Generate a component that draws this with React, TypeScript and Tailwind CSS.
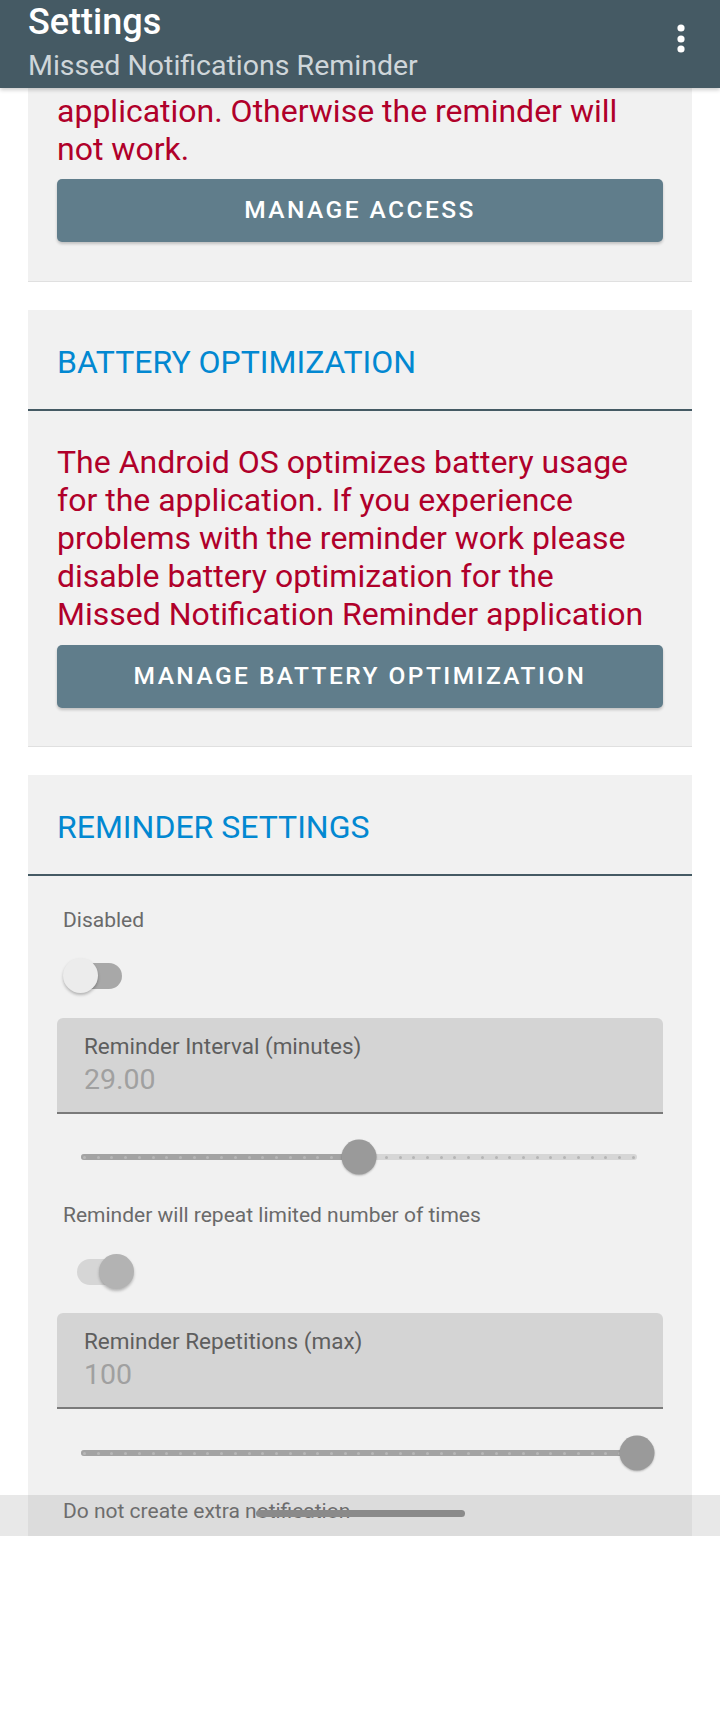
import React from "react";

const ROBOTO = { fontFamily: "Roboto, 'Noto Sans', sans-serif" };

function Ticks({ split }: { split: number }) {
  const n = 40;
  const items = [];
  for (let i = 0; i <= n; i++) {
    const active = i / n <= split;
    items.push(
      <span
        key={i}
        className={
          "block w-[3px] h-[3px] rounded-full " +
          (active ? "bg-[#b8b8b8]" : "bg-[#b4b4b4]")
        }
      />
    );
  }
  return (
    <div className="absolute inset-0 flex items-center justify-between px-[2px]">
      {items}
    </div>
  );
}

function Slider({ value }: { value: number }) {
  return (
    <div className="h-[40px] flex items-center pl-[24px] pr-[26px]">
      <div className="relative w-full h-[6px] rounded-full bg-[#d6d6d6]">
        <div
          className="absolute left-0 top-0 h-full rounded-full bg-[#a3a3a3]"
          style={{ width: `${value * 100}%` }}
        />
        <Ticks split={value} />
        <div
          className="absolute top-1/2 w-[35px] h-[35px] -translate-x-1/2 -translate-y-1/2 rounded-full bg-[#9a9a9a] shadow-[0_1px_2px_rgba(0,0,0,0.25)]"
          style={{ left: `${value * 100}%` }}
        />
      </div>
    </div>
  );
}

function Switch({ on }: { on: boolean }) {
  return (
    <div className="h-[36px] pl-[6px] flex items-center">
      <div className="relative w-[72px] h-[36px]">
        <div
          className={
            "absolute left-[14px] top-[5px] w-[45px] h-[26px] rounded-full " +
            (on ? "bg-[#d6d6d6]" : "bg-[#a8a8a8]")
          }
        />
        <div
          className={
            "absolute top-0 w-[35px] h-[35px] rounded-full shadow-[0_2px_3px_rgba(0,0,0,0.25)] " +
            (on ? "left-[36px] bg-[#b3b3b3]" : "left-0 bg-[#ececec]")
          }
        />
      </div>
    </div>
  );
}

function Field({ label, value }: { label: string; value: string }) {
  return (
    <div className="h-[96px] bg-[#d4d4d4] rounded-t-[6px] border-b-2 border-[#7a7a7a] pl-[27px] pt-[14px]">
      <div className="h-[28px] leading-[28px] text-[22.5px] text-[#5e5e5e]">{label}</div>
      <div className="h-[38px] leading-[38px] text-[28.5px] text-[#a0a0a0] mt-[1px]">{value}</div>
    </div>
  );
}

function Hint({ children }: { children: React.ReactNode }) {
  return (
    <div className="h-[28px] leading-[28px] pl-[6px] text-[21px] text-[#6a6a6a]">
      {children}
    </div>
  );
}

function Red({ lines }: { lines: string[] }) {
  return (
    <div className="text-[#b0002a] text-[32px] leading-[38px]">
      {lines.map((l, i) => (
        <div key={i} className="whitespace-nowrap">
          {l}
        </div>
      ))}
    </div>
  );
}

function Button({ children }: { children: React.ReactNode }) {
  return (
    <div className="h-[63px] rounded-[5px] bg-[#607d8b] shadow-[0_2px_3px_rgba(0,0,0,0.2)] flex items-center justify-center text-white text-[24.5px] font-medium tracking-[0.1em]">
      {children}
    </div>
  );
}

function SectionTitle({ children }: { children: React.ReactNode }) {
  return (
    <div className="h-[101px] flex items-center pl-[29px] border-b-2 border-[#455a64]">
      <span className="text-[32px] text-[#0288d1] pt-[4px]">{children}</span>
    </div>
  );
}

export default function App() {
  return (
    <div className="w-[720px] h-[1712px] bg-white relative overflow-hidden" style={ROBOTO}>
      <div className="h-[1536px] relative overflow-hidden bg-white">
        {/* header */}
        <div className="absolute top-0 left-0 right-0 h-[88px] bg-[#455a64] z-10 shadow-[0_2px_4px_rgba(0,0,0,0.2)] pl-[28px] pt-[2px] flex flex-col">
          <div className="h-[40px] leading-[40px] text-[36px] font-medium text-white">Settings</div>
          <div className="h-[32px] leading-[32px] mt-[8px] text-[28.5px] text-[#cfd6da]">
            Missed Notifications Reminder
          </div>
          <svg className="absolute left-[675px] top-[22px]" width="12" height="34" viewBox="0 0 12 34">
            <circle cx="6" cy="6" r="3.6" fill="#fff" />
            <circle cx="6" cy="17" r="3.6" fill="#fff" />
            <circle cx="6" cy="27" r="3.6" fill="#fff" />
          </svg>
        </div>

        <div className="pt-[88px] px-[28px] flex flex-col">
          {/* card 1 (scrolled) */}
          <div className="bg-[#f1f1f1] border-b border-[#e0e0e0] px-[29px] pt-[4px] pb-[39px]">
            <Red lines={["application. Otherwise the reminder will", "not work."]} />
            <div className="mt-[11px]">
              <Button>MANAGE ACCESS</Button>
            </div>
          </div>

          {/* card 2 */}
          <div className="mt-[28px] bg-[#f1f1f1] border-b border-[#e0e0e0]">
            <SectionTitle>BATTERY OPTIMIZATION</SectionTitle>
            <div className="px-[29px] pt-[32px] pb-[38px]">
              <Red
                lines={[
                  "The Android OS optimizes battery usage",
                  "for the application. If you experience",
                  "problems with the reminder work please",
                  "disable battery optimization for the",
                  "Missed Notification Reminder application",
                ]}
              />
              <div className="mt-[12px]">
                <Button>MANAGE BATTERY OPTIMIZATION</Button>
              </div>
            </div>
          </div>

          {/* card 3 */}
          <div className="mt-[28px] bg-[#f1f1f1]">
            <SectionTitle>REMINDER SETTINGS</SectionTitle>
            <div className="px-[29px] pt-[30px] pb-[60px] flex flex-col">
              <Hint>Disabled</Hint>
              <div className="mt-[24px]">
                <Switch on={false} />
              </div>
              <div className="mt-[24px]">
                <Field label="Reminder Interval (minutes)" value="29.00" />
              </div>
              <div className="mt-[23px]">
                <Slider value={0.5} />
              </div>
              <div className="mt-[24px]">
                <Hint>Reminder will repeat limited number of times</Hint>
              </div>
              <div className="mt-[25px]">
                <Switch on={true} />
              </div>
              <div className="mt-[23px]">
                <Field label="Reminder Repetitions (max)" value="100" />
              </div>
              <div className="mt-[24px]">
                <Slider value={1} />
              </div>
              <div className="mt-[24px]">
                <Hint>Do not create extra notification</Hint>
              </div>
            </div>
          </div>
        </div>

        {/* nav bar overlay */}
        <div className="absolute left-0 right-0 top-[1495px] h-[41px] bg-[rgba(128,128,128,0.18)] z-10">
          <div className="absolute left-[256px] top-[15px] w-[209px] h-[7px] rounded-full bg-[#8a8a8a]" />
        </div>
      </div>
    </div>
  );
}
